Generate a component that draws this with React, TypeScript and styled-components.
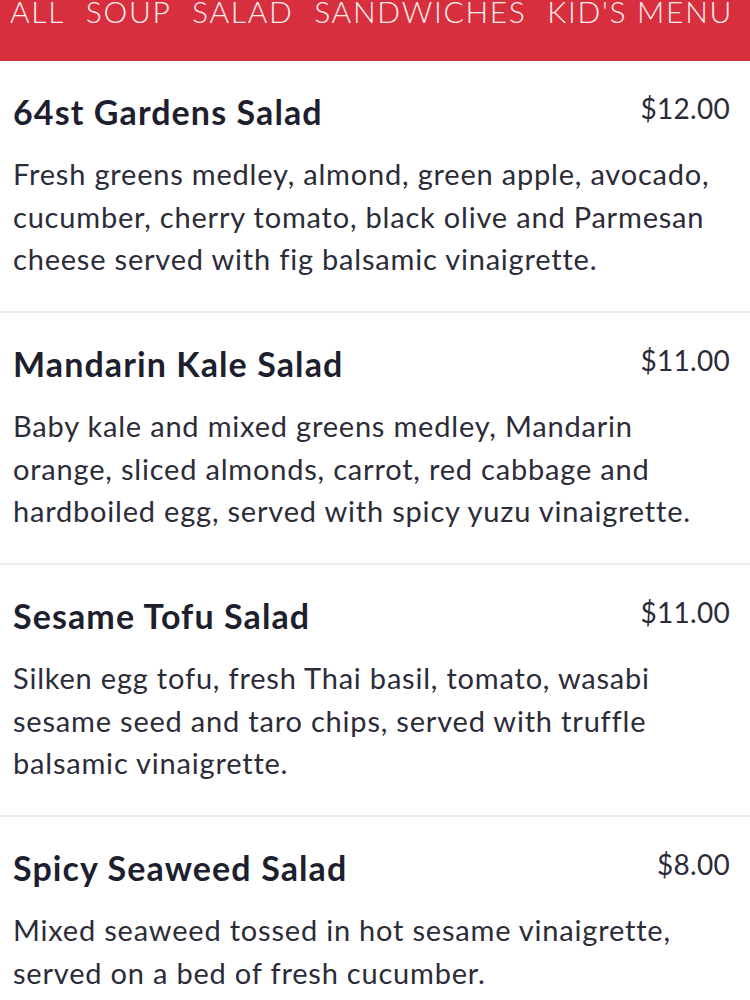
import { FC } from "react";
import styled, { createGlobalStyle } from "styled-components";

type MenuItem = {
  name: string;
  price: string;
  description: string;
};

const categories = ["ALL", "SOUP", "SALAD", "SANDWICHES", "KID'S MENU"];

const items: MenuItem[] = [
  {
    name: "64st Gardens Salad",
    price: "$12.00",
    description:
      "Fresh greens medley, almond, green apple, avocado, cucumber, cherry tomato, black olive and Parmesan cheese served with fig balsamic vinaigrette.",
  },
  {
    name: "Mandarin Kale Salad",
    price: "$11.00",
    description:
      "Baby kale and mixed greens medley, Mandarin orange, sliced almonds, carrot, red cabbage and hardboiled egg, served with spicy yuzu vinaigrette.",
  },
  {
    name: "Sesame Tofu Salad",
    price: "$11.00",
    description:
      "Silken egg tofu, fresh Thai basil, tomato, wasabi sesame seed and taro chips, served with truffle balsamic vinaigrette.",
  },
  {
    name: "Spicy Seaweed Salad",
    price: "$8.00",
    description:
      "Mixed seaweed tossed in hot sesame vinaigrette, served on a bed of fresh cucumber.",
  },
];

const GlobalStyle = createGlobalStyle`
  html, body {
    margin: 0;
    padding: 0;
    background: #ffffff;
  }
  body {
    font-family: Lato, "Noto Sans", sans-serif;
    -webkit-font-smoothing: antialiased;
  }
`;

const App: FC = () => {
  return (
    <>
      <GlobalStyle />
      <Page>
        <CategoryBar>
          {categories.map((c) => (
            <CategoryTab key={c}>{c}</CategoryTab>
          ))}
        </CategoryBar>
        <ItemList>
          {items.map((item) => (
            <MenuItemRow key={item.name} item={item} />
          ))}
        </ItemList>
      </Page>
    </>
  );
};

const MenuItemRow: FC<{ item: MenuItem }> = ({ item }) => {
  return (
    <ItemContainer>
      <ItemHeader>
        <ItemName>{item.name}</ItemName>
        <ItemPrice>{item.price}</ItemPrice>
      </ItemHeader>
      <ItemDescription>{item.description}</ItemDescription>
    </ItemContainer>
  );
};

const Page = styled.div`
  width: 750px;
  height: 1000px;
  overflow: hidden;
  display: flex;
  flex-direction: column;
`;

// header is scrolled up in the shot, so the labels hug the top edge
const CategoryBar = styled.nav`
  height: 61px;
  flex-shrink: 0;
  background: #d82f3f;
  display: flex;
  justify-content: space-between;
  align-items: flex-start;
  padding: 0 17px 0 10px;
  box-sizing: border-box;
`;

const CategoryTab = styled.span`
  color: #fdf1f2;
  font-size: 30px;
  font-weight: 300;
  line-height: 23px;
  letter-spacing: 1.7px;
  white-space: nowrap;
`;

const ItemList = styled.div`
  display: flex;
  flex-direction: column;
`;

const ItemContainer = styled.section`
  height: 252px;
  flex-shrink: 0;
  box-sizing: border-box;
  padding: 29px 20px 0 13px;
  border-bottom: 2px solid #eaebed;
  color: #2c2c39;
`;

const ItemHeader = styled.div`
  display: flex;
  justify-content: space-between;
  align-items: flex-start;
`;

const ItemName = styled.h2`
  margin: 0;
  color: #1e1f2e;
  font-size: 34px;
  font-weight: 700;
  line-height: 44px;
  letter-spacing: 1.1px;
`;

const ItemPrice = styled.span`
  font-size: 28px;
  font-weight: 400;
  line-height: 36px;
  letter-spacing: 0.3px;
`;

const ItemDescription = styled.p`
  margin: 19px 0 0;
  font-size: 29px;
  line-height: 42.5px;
  font-weight: 400;
  letter-spacing: 0.8px;
`;

export default App;
